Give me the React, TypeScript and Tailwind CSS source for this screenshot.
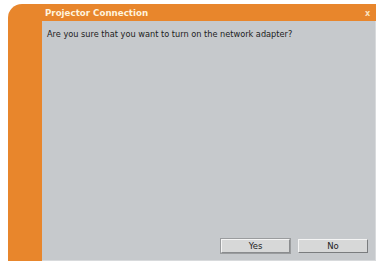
import React from "react";

export default function App() {
  return (
    <div className="w-[382px] h-[265px] bg-white relative overflow-hidden" style={{ fontFamily: '"DejaVu Sans", sans-serif' }}>
      <div className="absolute left-[8px] top-[4px] w-[368px] h-[257px] bg-[#e8862c] rounded-tl-[14px] flex flex-col">
        <div className="h-[17px] flex items-center pl-[37px] pr-[4px] pt-[2px]">
          <span className="text-[8.7px] font-bold text-[#fff3dc] leading-none">Projector Connection</span>
          <div className="ml-auto w-[9px] h-[9px] flex items-center justify-center text-[8px] font-bold text-[#fbe3c0] leading-none">x</div>
        </div>
        <div className="flex-1 ml-[34px] bg-[#c6c9cc] flex flex-col border-r border-b border-[#d8dadc]">
          <div className="pl-[5px] pt-[9px] text-[8.2px] text-[#222] leading-none">Are you sure that you want to turn on the network adapter?</div>
          <div className="mt-auto mb-[7px] flex justify-end gap-[8px] pr-[7px]">
            <button className="w-[69px] h-[14px] bg-[#d7d8d8] border border-[#8a8c8e] border-t-[#f4f4f4] border-l-[#f4f4f4] text-[8.5px] text-[#222] leading-none flex items-center justify-center outline outline-1 outline-[#9a9c9e]">Yes</button>
            <button className="w-[70px] h-[14px] bg-[#d7d8d8] border border-[#7a7c7e] border-t-[#f4f4f4] border-l-[#f4f4f4] text-[8.5px] text-[#222] leading-none flex items-center justify-center">No</button>
          </div>
        </div>
      </div>
    </div>
  );
}
